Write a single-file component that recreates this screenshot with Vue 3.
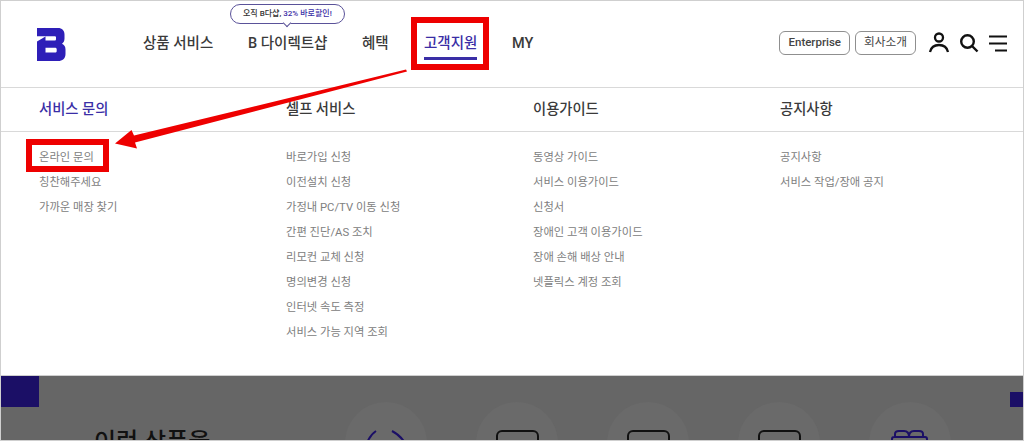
<script setup>
const NAV = [
  { label: '상품 서비스', width: 69, gap: 36 },
  { label: 'B 다이렉트샵', width: 78, gap: 36, promo: true },
  { label: '혜택', width: 26, gap: 36 },
  { label: '고객지원', width: 53, gap: 35, active: true },
  { label: 'MY', width: 21, gap: 0 },
]

const COLUMNS = [
  { title: '서비스 문의', active: true, items: ['온라인 문의', '칭찬해주세요', '가까운 매장 찾기'] },
  {
    title: '셀프 서비스',
    items: [
      '바로가입 신청',
      '이전설치 신청',
      '가정내 PC/TV 이동 신청',
      '간편 진단/AS 조치',
      '리모컨 교체 신청',
      '명의변경 신청',
      '인터넷 속도 측정',
      '서비스 가능 지역 조회',
    ],
  },
  {
    title: '이용가이드',
    items: ['동영상 가이드', '서비스 이용가이드', '신청서', '장애인 고객 이용가이드', '장애 손해 배상 안내', '넷플릭스 계정 조회'],
  },
  { title: '공지사항', items: ['공지사항', '서비스 작업/장애 공지'] },
]
</script>

<template>
  <div class="page">
    <header class="top">
      <svg class="logo" width="29" height="33" viewBox="0 0 29 33">
        <path
          fill="#2e1fb8"
          fill-rule="evenodd"
          d="M0 0H21C25 0 27.500 2.500 27.500 6.500V10.500C27.500 13 26.500 14.800 25 15.700C27.300 16.700 28.500 18.700 28.500 21.500V26C28.500 30.500 25.500 33 21 33H0V13.500L8.500 8.500V12.500H17.500C18.500 12.500 19 12 19 11V9.500C19 8.800 18.500 8.300 17.500 8.300H0ZM8.500 19.700V24.500H18C19 24.500 19.700 24 19.700 23V21.200C19.700 20.200 19 19.700 18 19.700Z"
        />
      </svg>

      <nav class="nav">
        <a
          v-for="item in NAV"
          :key="item.label"
          class="nav-item"
          :class="{ active: item.active }"
          :style="{ width: item.width + 'px', marginRight: item.gap + 'px' }"
        >
          <span v-if="item.promo" class="promo">오직 B다샵, <b>32% 바로할인!</b></span>
          {{ item.label }}
        </a>
      </nav>

      <div class="right">
        <a class="pill">Enterprise</a>
        <a class="pill">회사소개</a>
        <svg class="icon person" width="22" height="22" viewBox="0 0 22 22" fill="none" stroke="#111" stroke-width="2.300">
          <circle cx="11" cy="6.500" r="4" />
          <path d="M2 21C3 16.500 6.500 14 11 14S19 16.500 20 21" />
        </svg>
        <svg class="icon" width="20" height="20" viewBox="0 0 20 20" fill="none" stroke="#111" stroke-width="2.400">
          <circle cx="8.500" cy="8.500" r="6.300" />
          <path d="M13 13L18.500 18.500" />
        </svg>
        <svg class="icon" width="19" height="17" viewBox="0 0 19 17" fill="none" stroke="#111" stroke-width="2">
          <path d="M1 1.500H19M1 8.500H19M7 15.500H19" />
        </svg>
      </div>
    </header>

    <section class="menu">
      <div class="heads">
        <div v-for="col in COLUMNS" :key="col.title" class="head" :class="{ active: col.active }">
          {{ col.title }}
        </div>
      </div>
      <div class="lists">
        <ul v-for="col in COLUMNS" :key="col.title" class="list">
          <li v-for="item in col.items" :key="item">{{ item }}</li>
        </ul>
      </div>
    </section>

    <section class="dim">
      <div class="block left"></div>
      <div class="block right-a"></div>
      <h2 class="peek">이런 상품을</h2>
      <div class="circles">
        <span class="circle"><svg width="42" height="14" viewBox="0 0 42 14" fill="none" stroke="#1b0f66" stroke-width="2"><path d="M11 1Q5 5 2 13M27 1Q35 5 40 13" /></svg></span>
        <span class="circle"><i class="screen"></i></span>
        <span class="circle"><i class="screen"></i></span>
        <span class="circle"><i class="screen"></i></span>
        <span class="circle"><svg width="40" height="14" viewBox="0 0 40 14" fill="none" stroke="#1b0f66" stroke-width="2"><path d="M5 7V4C5 2 7 1 9 1H14C17 1 19 3 19 7C19 3 21 1 24 1H29C31 1 33 2 33 4V7M2 11V9C2 8 3 7 4 7H35C36 7 37 8 37 9V11" /></svg></span>
      </div>
    </section>

    <!-- 캡처 위에 그려진 빨간 표시 -->
    <div class="mark mark-nav"></div>
    <div class="mark mark-item"></div>
    <svg class="arrow" width="1024" height="441" viewBox="0 0 1024 441">
      <path fill="#ee0000" d="M406 69.500L407 71.500L135 142.500L137 148.500L115 143.500L131.500 130L134 135.500Z" />
    </svg>
  </div>
</template>

<style>
body {
  margin: 0;
  background: #fff;
}
</style>

<style scoped>
.page {
  position: relative;
  width: 1024px;
  height: 441px;
  box-sizing: border-box;
  border: 1px solid #cfcfcf;
  overflow: hidden;
  background: #fff;
  font-family: Roboto, 'Noto Sans CJK KR', 'Noto Sans', sans-serif;
  color: #222;
}

.top {
  display: flex;
  align-items: center;
  height: 86px;
  padding: 0 16px 0 36px;
  border-bottom: 1px solid #d9d9d9;
}
.logo {
  flex: none;
  margin-top: 1px;
}
.nav {
  display: flex;
  margin-left: 77px;
  margin-top: 0;
}
.nav-item {
  position: relative;
  flex: none;
  font-size: 14.500px;
  font-weight: 500;
  line-height: 26px;
  white-space: nowrap;
  color: #3a3a3a;
}
.nav-item.active {
  color: #3a2ea6;
}
.nav-item.active::after {
  content: '';
  position: absolute;
  left: 0;
  right: 0;
  bottom: -3px;
  height: 3px;
  background: #3a2ea6;
}
.promo {
  position: absolute;
  left: -18px;
  top: -27px;
  height: 18px;
  padding: 0 12px;
  border: 1px solid #5a5299;
  border-radius: 10px;
  background: #fff;
  font-size: 8px;
  line-height: 18px;
  font-weight: 500;
  color: #333;
}
.promo b {
  font-weight: 500;
  color: #3a2ea6;
}
.promo::after {
  content: '';
  position: absolute;
  left: 50%;
  bottom: -3px;
  width: 5px;
  height: 5px;
  margin-left: -3px;
  background: #fff;
  border-right: 1px solid #5a5299;
  border-bottom: 1px solid #5a5299;
  transform: rotate(45deg);
}

.right {
  display: flex;
  align-items: center;
  margin-left: auto;
  margin-top: -2px;
}
.pill {
  box-sizing: border-box;
  height: 24px;
  margin-right: 5px;
  padding: 0 8px;
  border: 1px solid #8f8f8f;
  border-radius: 6px;
  font-size: 11.500px;
  font-weight: 500;
  line-height: 21px;
  color: #444;
}
.pill:nth-child(2) {
  margin-right: 12px;
  font-size: 11.700px;
  font-weight: 400;
}
.icon {
  flex: none;
  margin-right: 9px;
}
.icon.person {
  margin-top: -2px;
}
.icon:last-child {
  margin-right: 0;
}

.heads,
.lists {
  display: grid;
  grid-template-columns: repeat(4, 247px);
  padding-left: 38px;
}
.heads {
  height: 43px;
  border-bottom: 1px solid #d9d9d9;
}
.head {
  font-size: 14.300px;
  font-weight: 500;
  line-height: 43px;
  color: #3a3a3a;
}
.head.active {
  color: #3a2ea6;
}
.lists {
  height: 244px;
  padding-top: 13px;
  box-sizing: border-box;
  border-bottom: 1px solid #cfcfcf;
}
.list {
  margin: 0;
  padding: 0;
  list-style: none;
}
.list li {
  height: 25px;
  font-size: 11.300px;
  line-height: 25px;
  color: #808080;
}

.dim {
  position: relative;
  height: 65px;
  background: #666;
  overflow: hidden;
}
.block {
  position: absolute;
  background: #1b0f66;
}
.block.left {
  left: 0;
  top: 0;
  width: 38px;
  height: 31px;
}
.block.right-a {
  right: 0;
  top: 16px;
  width: 13px;
  height: 15px;
}
.peek {
  position: absolute;
  left: 93px;
  top: 50px;
  margin: 0;
  font-size: 24px;
  font-weight: 500;
  line-height: 32px;
  white-space: nowrap;
  color: #111;
}
.circles {
  position: absolute;
  left: 344px;
  top: 26px;
  display: flex;
  gap: 49px;
}
.circle {
  display: flex;
  justify-content: center;
  width: 82px;
  height: 82px;
  padding-top: 28px;
  box-sizing: border-box;
  border-radius: 50%;
  background: #6a6a6a;
}
.screen {
  width: 43px;
  height: 30px;
  box-sizing: border-box;
  border: 2px solid #111;
  border-radius: 6px;
}

.mark {
  position: absolute;
  box-sizing: border-box;
  border: 6px solid #ee0000;
}
.mark-nav {
  left: 410px;
  top: 16px;
  width: 78px;
  height: 53px;
}
.mark-item {
  left: 25px;
  top: 138px;
  width: 83px;
  height: 33px;
}
.arrow {
  position: absolute;
  left: -1px;
  top: -1px;
  pointer-events: none;
}
</style>
